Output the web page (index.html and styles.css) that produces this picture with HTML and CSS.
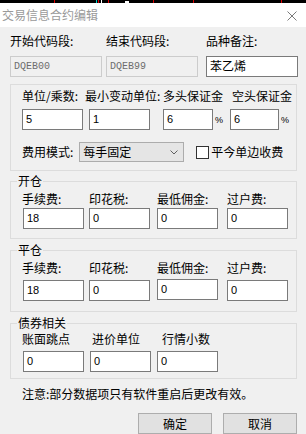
FILE: index.html
```html
<!DOCTYPE html>
<html lang="zh">
<head>
<meta charset="utf-8">
<link rel="stylesheet" href="styles.css">
</head>
<body>
<div class="window">
  <div class="strip">
    <svg width="306" height="3" viewBox="0 0 306 3">
      <rect x="54" y="0" width="1" height="3" fill="#d00"/>
      <rect x="96" y="0" width="1" height="3" fill="#0cc"/>
      <rect x="98" y="0" width="1" height="3" fill="#d00"/>
      <rect x="101" y="0" width="1" height="3" fill="#fff"/>
      <rect x="108" y="0" width="1" height="3" fill="#d00"/>
      <rect x="125" y="1" width="4" height="2" fill="#fff"/>
      <rect x="153" y="0" width="1" height="3" fill="#d00"/>
      <rect x="193" y="0" width="1" height="3" fill="#d00"/>
      <rect x="281" y="0" width="1" height="3" fill="#d00"/>
    </svg>
  </div>
  <div class="titlebar">
    <span class="title">交易信息合约编辑</span>
    <svg class="close" width="10" height="10" viewBox="0 0 10 10">
      <path d="M0.5 0.5 L9.5 9.5 M9.5 0.5 L0.5 9.5" stroke="#7a7a7a" stroke-width="1" fill="none"/>
    </svg>
  </div>
  <div class="content">
    <div class="row-top">
      <div class="cell">
        <div class="lbl">开始代码段:</div>
        <div class="inp disabled">DQEB00</div>
      </div>
      <div class="cell">
        <div class="lbl">结束代码段:</div>
        <div class="inp disabled">DQEB99</div>
      </div>
      <div class="cell">
        <div class="lbl">品种备注:</div>
        <div class="inp cjk">苯乙烯</div>
      </div>
    </div>

    <fieldset class="group g1">
      <div class="grid4 labels">
        <span class="lbl">单位/乘数:</span>
        <span class="lbl shift-l4">最小变动单位:</span>
        <span class="lbl">多头保证金</span>
        <span class="lbl shift-r2">空头保证金</span>
      </div>
      <div class="grid4 inputs">
        <div class="inp w61">5</div>
        <div class="inp w61">1</div>
        <div class="pct"><div class="inp w50">6</div><span class="pc">%</span></div>
        <div class="pct"><div class="inp w49">6</div><span class="pc">%</span></div>
      </div>
      <div class="feerow">
        <span class="lbl">费用模式:</span>
        <div class="select">
          <span>每手固定</span>
          <svg width="8" height="5" viewBox="0 0 8 5"><path d="M0.5 0.5 L4 4 L7.5 0.5" stroke="#606060" fill="none"/></svg>
        </div>
        <div class="check"><span class="box"></span><span class="lbl">平今单边收费</span></div>
      </div>
    </fieldset>

    <fieldset class="group g2">
      <legend>开仓</legend>
      <div class="grid4b labels">
        <span class="lbl">手续费:</span>
        <span class="lbl">印花税:</span>
        <span class="lbl">最低佣金:</span>
        <span class="lbl">过户费:</span>
      </div>
      <div class="grid4b inputs2">
        <div class="inp w61 ml1">18</div>
        <div class="inp w61">0</div>
        <div class="inp w61">0</div>
        <div class="inp w61">0</div>
      </div>
    </fieldset>

    <fieldset class="group g3">
      <legend>平仓</legend>
      <div class="grid4b labels">
        <span class="lbl">手续费:</span>
        <span class="lbl">印花税:</span>
        <span class="lbl">最低佣金:</span>
        <span class="lbl">过户费:</span>
      </div>
      <div class="grid4b inputs3">
        <div class="inp w61 ml1">18</div>
        <div class="inp w61">0</div>
        <div class="inp w61 up1">0</div>
        <div class="inp w61">0</div>
      </div>
    </fieldset>

    <fieldset class="group g4">
      <legend>债券相关</legend>
      <div class="grid3 labels">
        <span class="lbl">账面跳点</span>
        <span class="lbl shift-r3">进价单位</span>
        <span class="lbl shift-r5">行情小数</span>
      </div>
      <div class="grid3 inputs4">
        <div class="inp w61 ml1">0</div>
        <div class="inp w61 ml1">0</div>
        <div class="inp w61">0</div>
      </div>
    </fieldset>

    <p class="note">注意:部分数据项只有软件重启后更改有效。</p>

    <div class="buttons">
      <button class="btn">确定</button>
      <button class="btn">取消</button>
    </div>
  </div>
</div>
</body>
</html>
```

FILE: styles.css
```css
* { box-sizing: border-box; }
html, body { margin: 0; padding: 0; }
body {
  font-family: "Noto Sans CJK SC", "Noto Sans", sans-serif;
  font-size: 12px;
  color: #000;
  background: #f0f0f0;
}
.window {
  width: 306px;
  height: 434px;
  overflow: hidden;
  background: #f0f0f0;
  display: flex;
  flex-direction: column;
}
.strip { height: 3px; background: #000; line-height: 0; }
.strip svg { display: block; }
.titlebar {
  height: 25px;
  background: #fff;
  display: flex;
  align-items: center;
  justify-content: space-between;
  padding: 0 9px 0 2px;
}
.title { color: #9a9a9a; font-size: 12px; line-height: 14px; }
.close { display: block; margin-top: 1px; }

.content { padding: 7px 9px 0 10px; }
.lbl { line-height: 14px; white-space: nowrap; }

.row-top {
  display: grid;
  grid-template-columns: 96px 100px 91px;
}
.row-top .lbl { margin-bottom: 8px; }
.row-top .inp { width: 92px; height: 21px; }

.inp {
  height: 21px;
  border: 1px solid #7a7a7a;
  background: #fff;
  font-family: "Liberation Sans", Arial, sans-serif;
  font-size: 11px;
  line-height: 19px;
  padding-left: 3px;
  white-space: nowrap;
}
.inp.disabled {
  background: #f0f0f0;
  border-color: #cccccc;
  color: #6d6d6d;
  font-family: "Liberation Mono", monospace;
  font-size: 10px;
}
.inp.cjk {
  font-family: "Noto Sans CJK SC", sans-serif;
  font-size: 12px;
  line-height: 18px;
}
.w61 { width: 61px; }
.w50 { width: 50px; }
.w49 { width: 49px; }
.ml1 { margin-left: 1px; }
.up1 { margin-top: -1px; }

.group {
  margin: 0;
  border: 1px solid #dcdcdc;
  min-width: 0;
  width: 287px;
}
.group legend {
  padding: 0 1px;
  margin-left: -5px;
  line-height: 14px;
  font-size: 12px;
}
.g1 { margin-top: 7px; padding: 4px 8px 8px 11px; }
.g2 { margin-top: 3px; padding: 4px 8px 9px 11px; }
.g3 { margin-top: 4px; padding: 4px 8px 10px 11px; }
.g4 { margin-top: 4px; padding: 2px 8px 6px 11px; }

.grid4 { display: grid; grid-template-columns: 67px 74px 67px 1fr; }
.grid4b { display: grid; grid-template-columns: 67px 68px 70px 1fr; }
.grid3 { display: grid; grid-template-columns: 67px 68px 1fr; }
.shift-l4 { margin-left: -4px; }
.shift-r2 { margin-left: 2px; }
.shift-r3 { margin-left: 3px; }
.shift-r5 { margin-left: 5px; }

.g1 .inputs { margin-top: 6px; }
.inputs2 { margin-top: 2px; }
.inputs3 { margin-top: 5px; }
.inputs4 { margin-top: 5px; }

.pct { display: flex; align-items: center; }
.pc { font-family: "Liberation Sans", Arial, sans-serif; font-size: 9px; margin-left: 2px; letter-spacing: -1px; }

.feerow {
  display: flex;
  align-items: center;
  margin-top: 12px;
}
.select {
  width: 105px;
  height: 20px;
  margin-left: 6px;
  background: #e5e5e5;
  border: 1px solid #acacac;
  display: flex;
  align-items: center;
  justify-content: space-between;
  padding: 0 5px 0 3px;
  line-height: 14px;
}
.select svg { display: block; margin-top: 1px; }
.check { display: flex; align-items: center; margin-left: 12px; }
.box {
  width: 13px;
  height: 13px;
  border: 1px solid #333;
  background: #fff;
  margin-right: 2px;
}

.note { margin: 8px 0 0 12px; line-height: 14px; }
.buttons {
  display: flex;
  justify-content: flex-end;
  gap: 11px;
  margin-top: 12px;
}
.btn {
  width: 74px;
  height: 21px;
  background: #e1e1e1;
  border: 1px solid #adadad;
  font-family: "Noto Sans CJK SC", sans-serif;
  font-size: 12px;
  line-height: 14px;
  padding: 0;
  color: #000;
}
```
